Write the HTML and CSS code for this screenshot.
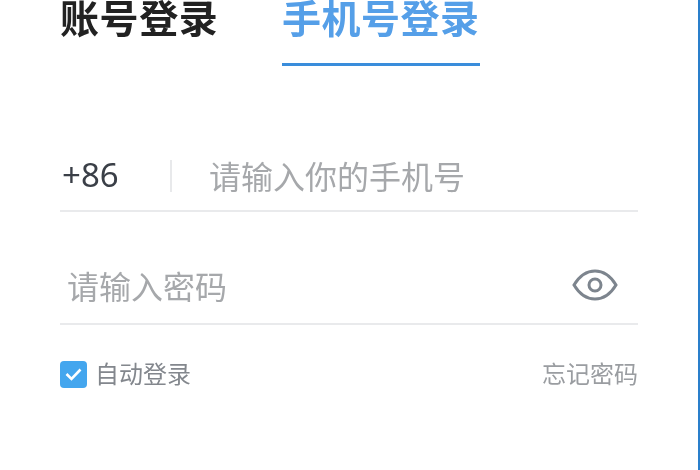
FILE: index.html
```html
<!DOCTYPE html>
<html lang="zh-CN">
<head>
    <meta charset="UTF-8">
    <meta name="viewport" content="width=device-width, initial-scale=1.0">
    <title>手机号登录</title>
    <link rel="stylesheet" href="styles.css">
</head>
<body>
    <div class="login">
        <div class="tabs">
            <div class="tab">账号登录</div>
            <div class="tab active">手机号登录</div>
        </div>

        <div class="field phone">
            <span class="code">+86</span>
            <span class="sep"></span>
            <span class="hint">请输入你的手机号</span>
        </div>

        <div class="field password">
            <span class="hint">请输入密码</span>
            <svg class="eye" width="46" height="32" viewBox="0 0 46 32" fill="none" stroke="#7d858e" stroke-width="3">
                <path d="M2 16C8 6 15 2 23 2s15 4 21 14c-6 10-13 14-21 14S8 26 2 16z"/>
                <circle cx="23" cy="16" r="6"/>
            </svg>
        </div>

        <div class="options">
            <label class="auto">
                <span class="check">
                    <svg width="17" height="13" viewBox="0 0 17 13" fill="none" stroke="#fff" stroke-width="2.6">
                        <path d="M1.5 6l5 5 9-9.5"/>
                    </svg>
                </span>
                <span class="small">自动登录</span>
            </label>
            <span class="forgot small">忘记密码</span>
        </div>
    </div>
</body>
</html>
```

FILE: styles.css
```css
html, body {
    margin: 0;
    padding: 0;
    height: 100%;
    background: #fff;
    overflow: hidden;
}

.login {
    box-sizing: border-box;
    height: 470px;
    padding: 0 60px 0 60px;
    border-right: 2px solid #2a7fcb;
    font-family: "Noto Sans CJK SC", "Noto Sans", sans-serif;
    filter: blur(0.5px);
}

.tabs {
    display: flex;
    gap: 64px;
    height: 66px;
    width: 578px;
}

.tab {
    width: 158px;
    height: 66px;
    box-sizing: border-box;
    font-size: 39px;
    line-height: 33px;
    letter-spacing: 0.6px;
    font-weight: 700;
    color: #222;
    white-space: nowrap;
}

.tab.active {
    width: 198px;
    color: #559fe8;
    border-bottom: 3px solid #3a8ddb;
    letter-spacing: 0.5px;
}

.field {
    display: flex;
    align-items: center;
    width: 578px;
    border-bottom: 2px solid #e9eaec;
    box-sizing: border-box;
}

.phone {
    height: 146px;
    padding-top: 76px;
    padding-bottom: 0;
}

.code {
    width: 110px;
    padding-left: 2px;
    padding-bottom: 3px;
    box-sizing: border-box;
    font-family: "Noto Sans", sans-serif;
    font-size: 33px;
    color: #3a3f47;
}

.sep {
    width: 2px;
    height: 32px;
    background: #e8e9eb;
    margin-right: 37px;
}

.phone .hint {
    padding-bottom: 3px;
}

.hint {
    font-size: 32px;
    color: #a6a8ab;
    white-space: nowrap;
}

.password {
    height: 113px;
    padding-top: 34px;
    padding-left: 7px;
    justify-content: space-between;
}

.eye {
    margin-right: 20px;
}

.options {
    display: flex;
    justify-content: space-between;
    align-items: center;
    width: 578px;
    margin-top: 30px;
}

.auto {
    display: flex;
    align-items: center;
    gap: 8px;
    color: #83878d;
}

.small {
    font-size: 24px;
    padding-bottom: 4px;
}

.check {
    display: flex;
    align-items: center;
    justify-content: center;
    width: 27px;
    height: 27px;
    border-radius: 4px;
    background: #44a6ee;
}

.forgot {
    color: #9a9da1;
}
```
